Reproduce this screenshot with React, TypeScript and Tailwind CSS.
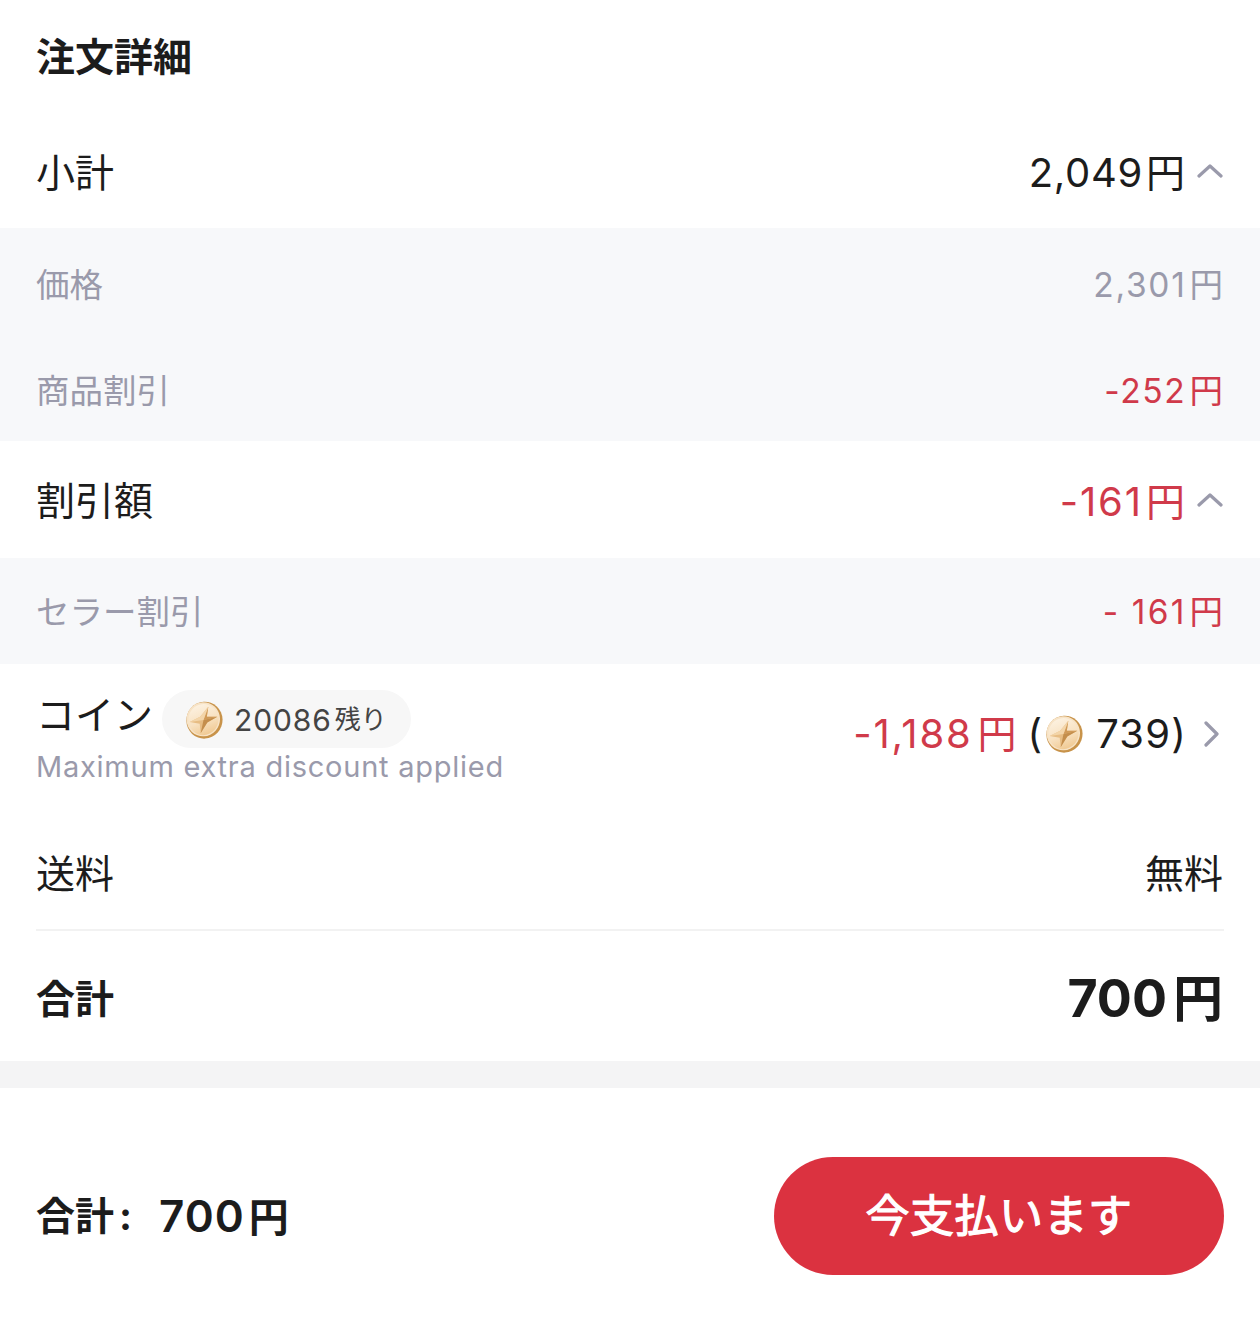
import React from 'react';

const Chevron: React.FC<{ dir: 'up' | 'right' }> = ({ dir }) => (
  <svg width="26" height="26" viewBox="0 0 26 26" fill="none" className="shrink-0">
    <path
      d={dir === 'up' ? 'M2 16 L13 6 L24 16' : 'M9 2 L20 13 L9 24'}
      stroke="#9a9aab"
      strokeWidth="3.2"
      strokeLinecap="round"
      strokeLinejoin="round"
    />
  </svg>
);

// gold coin with the four pointed star
const Coin: React.FC<{ id: string; size: number }> = ({ id, size }) => (
  <svg width={size} height={size} viewBox="0 0 40 40" className="shrink-0">
    <defs>
      <linearGradient id={id} x1="0.1" y1="0.05" x2="0.85" y2="0.95">
        <stop offset="0" stopColor="#fdf3e4" />
        <stop offset="0.55" stopColor="#f8e2c2" />
        <stop offset="1" stopColor="#efc68c" />
      </linearGradient>
    </defs>
    <ellipse cx="20.5" cy="20" rx="19" ry="19.5" fill="#c8934a" transform="rotate(20 20 20)" />
    <ellipse cx="19" cy="19.5" rx="17.6" ry="18" fill="#f7e3c6" transform="rotate(20 20 20)" />
    <ellipse cx="19.3" cy="19.8" rx="15.8" ry="16.4" fill={`url(#${id})`} transform="rotate(20 20 20)" />
    <path d="M24.5 6 L23 16.5 L34 16.5 L23.5 22.5 L16.5 34 L15.5 24 L5 22 L16 16.5 Z" fill="#e7bd84" />
    <path d="M24.5 6 L23 16.5 L34 16.5 L19.5 20 Z" fill="#d09a58" />
    <path d="M5 22 L16 16.5 L24.5 6 L19.5 20 Z" fill="#f3d5a9" />
    <path d="M16.5 34 L19.5 20 L34 16.5 L23.5 22.5 Z" fill="#c48e4c" />
  </svg>
);

// digits and the yen sign sit a little apart in the picture
const Price: React.FC<{ value: string; tracking: string; gap: string }> = ({ value, tracking, gap }) => (
  <span className="flex items-baseline">
    <span className={tracking}>{value}</span>
    <span className={gap}>円</span>
  </span>
);

const Row: React.FC<{ label: string; value: string; tracking: string; red?: boolean }> = ({ label, value, tracking, red }) => (
  <div className="flex items-center justify-between">
    <span>{label}</span>
    <span className="flex items-center gap-[12px]">
      <span className={red ? 'text-[#d03a4a]' : ''}>
        <Price value={value} tracking={tracking} gap="ml-[3px]" />
      </span>
      <Chevron dir="up" />
    </span>
  </div>
);

const SubRow: React.FC<{ label: string; value: string; tracking: string; red?: boolean; height: string }> = ({
  label,
  value,
  tracking,
  red,
  height,
}) => (
  <div className={`flex items-center justify-between pl-[36px] pr-[37px] text-[33.5px] text-[#9a9aab] ${height}`}>
    <span>{label}</span>
    <span className={red ? 'text-[#d03a4a]' : ''}>
      <Price value={value} tracking={tracking} gap="ml-[3px]" />
    </span>
  </div>
);

const App: React.FC = () => {
  return (
    <div className="h-[1336px] w-[1260px] overflow-hidden bg-white font-['Inter','Noto_Sans_CJK_JP',sans-serif] text-[39px] leading-[1.2] text-[#1c1c1c]">
      <div className="flex h-[116px] items-center pb-[2px] pl-[36px] pr-[37px] font-bold">注文詳細</div>

      <div className="flex h-[112px] flex-col justify-center pl-[36px] pr-[37px] pt-[2px]">
        <Row label="小計" value="2,049" tracking="text-[40px] tracking-[0.7px]" />
      </div>
      <div className="bg-[#f7f8fa]">
        <SubRow label="価格" value="2,301" tracking="tracking-[1.7px]" height="h-[106.5px] pt-[7px]" />
        <SubRow label="商品割引" value="-252" tracking="tracking-[1.7px]" height="h-[106.5px] pt-[7px]" red />
      </div>

      <div className="flex h-[117px] flex-col justify-center pl-[36px] pr-[37px] pt-[4px]">
        <Row label="割引額" value="-161" tracking="text-[40px] tracking-[1.9px]" red />
      </div>
      <div className="bg-[#f7f8fa]">
        <SubRow label="セラー割引" value="- 161" tracking="tracking-[2.2px]" height="h-[106px] pt-[3px]" red />
      </div>

      <div className="flex h-[156px] items-start justify-between pl-[36px] pr-[37px] pt-[26px]">
        <div>
          <div className="flex items-center gap-[9px]">
            <span className="pb-[8px]">コイン</span>
            <span className="flex h-[58px] w-[249px] items-center rounded-full bg-[#f7f7f7] pl-[23px] pt-[1px] text-[30px] text-[#444444]">
              <Coin id="coin-a" size={38} />
              <span className="ml-[11px] tracking-[0.9px]">20086</span>
              <span className="ml-[3px] text-[26px]">残り</span>
            </span>
          </div>
          <div className="mt-[2px] text-[29px] tracking-[0.75px] text-[#9a9aab]">Maximum extra discount applied</div>
        </div>
        <div className="flex items-center pt-[20px]">
          <span className="text-[#d03a4a]">
            <Price value="-1,188" tracking="text-[40px] tracking-[1.8px]" gap="ml-[5px]" />
          </span>
          <span className="ml-[11px] flex items-center">
            <span className="mr-[3px] text-[40px]">(</span>
            <Coin id="coin-b" size={38} />
            <span className="ml-[13px] text-[40px] tracking-[1.2px]">739)</span>
          </span>
          <span className="ml-[10px]">
            <Chevron dir="right" />
          </span>
        </div>
      </div>

      <div className="flex h-[109px] items-center justify-between pl-[36px] pr-[37px]">
        <span>送料</span>
        <span>無料</span>
      </div>
      <div className="mx-[36px] border-t-2 border-[#f2f2f2]" />
      <div className="flex h-[130px] items-center justify-between pl-[36px] pr-[37px] pt-[6px] font-bold">
        <span>合計</span>
        <span className="text-[52px]">
          <Price value="700" tracking="tracking-[0px]" gap="ml-[6px] text-[50px]" />
        </span>
      </div>
      <div className="h-[27px] bg-[#f4f4f5]" />

      <div className="flex h-[248px] items-center justify-between pl-[36px] pr-[36px] pt-[8px]">
        <div className="flex items-center">
          <span className="font-bold">
            合計<span className="ml-[5px]">:</span>
          </span>
          <span className="ml-[27px] text-[44px] font-semibold">
            <Price value="700" tracking="tracking-[1px]" gap="ml-[4px] text-[40px]" />
          </span>
        </div>
        <button className="flex h-[118px] w-[450px] items-center justify-center rounded-[59px] bg-[#db3240] text-[44px] font-normal tracking-[0.5px] text-white [-webkit-text-stroke:1.2px_white]">
          今支払います
        </button>
      </div>
    </div>
  );
};

export default App;
